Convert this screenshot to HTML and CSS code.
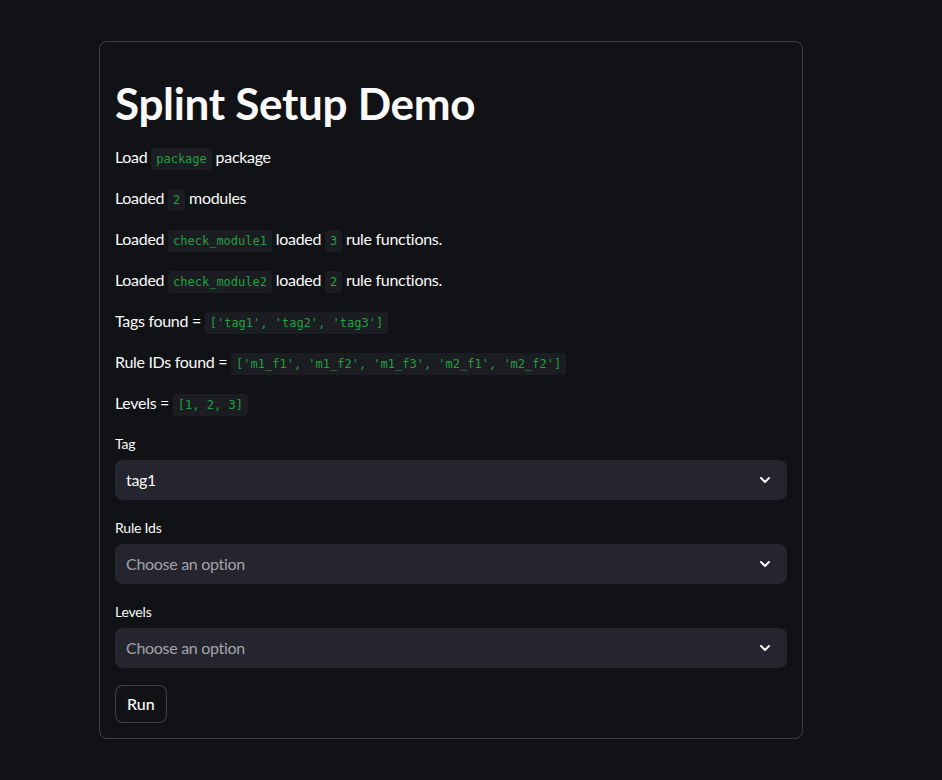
FILE: index.html
```html
<!DOCTYPE html>
<html>
<head>
<meta charset="utf-8">
<link rel="stylesheet" href="styles.css">
</head>
<body>
<main class="page">
  <section class="card">
    <h1 class="title">Splint Setup Demo</h1>
    <p class="line">Load <code>package</code> package</p>
    <p class="line">Loaded <code>2</code> modules</p>
    <p class="line">Loaded <code>check_module1</code> loaded <code>3</code> rule functions.</p>
    <p class="line">Loaded <code>check_module2</code> loaded <code>2</code> rule functions.</p>
    <p class="line">Tags found = <code>['tag1', 'tag2', 'tag3']</code></p>
    <p class="line">Rule IDs found = <code>['m1_f1', 'm1_f2', 'm1_f3', 'm2_f1', 'm2_f2']</code></p>
    <p class="line">Levels = <code>[1, 2, 3]</code></p>

    <div class="field">
      <label class="label">Tag</label>
      <div class="select">
        <span class="value">tag1</span>
        <svg class="chev" width="16" height="16" viewBox="0 0 16 16"><path d="M4 6l4 4 4-4" fill="none" stroke="#fafafa" stroke-width="2" stroke-linecap="round" stroke-linejoin="round"/></svg>
      </div>
    </div>
    <div class="field">
      <label class="label">Rule Ids</label>
      <div class="select">
        <span class="value placeholder">Choose an option</span>
        <svg class="chev" width="16" height="16" viewBox="0 0 16 16"><path d="M4 6l4 4 4-4" fill="none" stroke="#fafafa" stroke-width="2" stroke-linecap="round" stroke-linejoin="round"/></svg>
      </div>
    </div>
    <div class="field">
      <label class="label">Levels</label>
      <div class="select">
        <span class="value placeholder">Choose an option</span>
        <svg class="chev" width="16" height="16" viewBox="0 0 16 16"><path d="M4 6l4 4 4-4" fill="none" stroke="#fafafa" stroke-width="2" stroke-linecap="round" stroke-linejoin="round"/></svg>
      </div>
    </div>
    <button class="btn">Run</button>
  </section>
</main>
</body>
</html>
```

FILE: styles.css
```css
html, body {
  margin: 0;
  padding: 0;
  background: #111216;
  color: #fafafa;
  font-family: Lato, "Open Sans", sans-serif;
}
.page {
  padding: 41px 0 40px 99px;
}
.card {
  width: 672px;
  border: 1px solid rgba(250, 250, 250, 0.2);
  border-radius: 8px;
  padding: 15px 15px 15px 15px;
  display: flex;
  flex-direction: column;
  align-items: flex-start;
}
.title {
  margin: 0;
  padding: 20px 0 16px 0;
  font-size: 44px;
  line-height: 52.8px;
  font-weight: 700;
  letter-spacing: -0.3px;
}
.line {
  margin: 0 0 15.4px 0;
  height: 21.6px;
  padding-bottom: 4px;
  font-size: 16px;
  line-height: 21.6px;
  letter-spacing: -0.3px;
  white-space: nowrap;
}
.line:last-of-type {
  margin-bottom: 14.4px;
}
code {
  font-family: "DejaVu Sans Mono", "Liberation Mono", monospace;
  font-size: 12px;
  line-height: 1;
  letter-spacing: 0;
  color: #21a03f;
  background: #1c1d23;
  padding: 4px 5px;
  border-radius: 4px;
}
.field {
  width: 100%;
  margin-bottom: 16px;
}
.label {
  display: flex;
  align-items: center;
  height: 24px;
  margin-bottom: 4px;
  font-size: 14px;
  letter-spacing: -0.2px;
}
.select {
  height: 40px;
  background: #24252e;
  border-radius: 8px;
  display: flex;
  align-items: center;
  justify-content: space-between;
  padding: 0 14px 0 11px;
}
.value {
  font-size: 16px;
  letter-spacing: -0.3px;
}
.placeholder {
  color: rgba(250, 250, 250, 0.6);
}
.chev {
  display: block;
}
.btn {
  margin-top: 1px;
  height: 38px;
  padding: 0 11px;
  background: #111216;
  color: #fafafa;
  border: 1px solid rgba(250, 250, 250, 0.2);
  border-radius: 8px;
  font-family: Lato, "Open Sans", sans-serif;
  font-size: 16px;
  font-weight: 500;
}
```
